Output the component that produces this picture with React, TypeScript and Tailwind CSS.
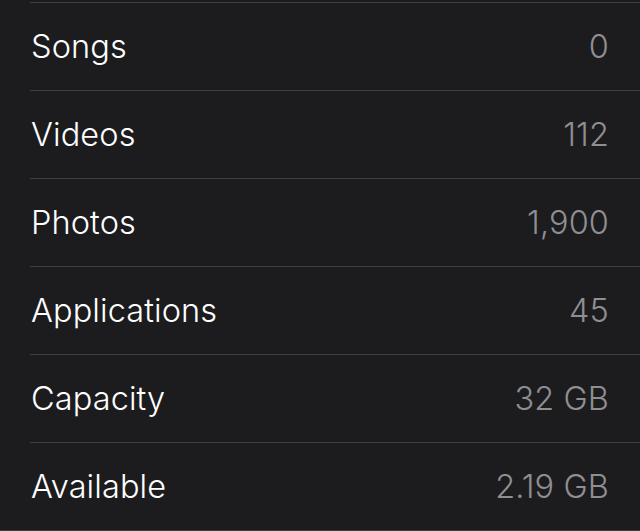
const rows = [
  { label: "Songs", value: "0" },
  { label: "Videos", value: "112" },
  { label: "Photos", value: "1,900" },
  { label: "Applications", value: "45" },
  { label: "Capacity", value: "32 GB" },
  { label: "Available", value: "2.19 GB" },
];

export default function App() {
  return (
    <div className="min-h-[531px] bg-[#1c1c1e] pt-[2px] font-['Inter',sans-serif]">
      <div className="border-b border-[#3d3d40]">
        {rows.map((row) => (
          <div key={row.label} className="pl-[30px]">
            <div className="flex h-[88px] items-center justify-between border-t border-[#3d3d40] pl-px pr-[31px] pt-[2px] text-[32.5px] font-light tracking-[0.1px]">
              <span className="text-white">{row.label}</span>
              <span className="text-[#8e8e93]">{row.value}</span>
            </div>
          </div>
        ))}
      </div>
    </div>
  );
}
